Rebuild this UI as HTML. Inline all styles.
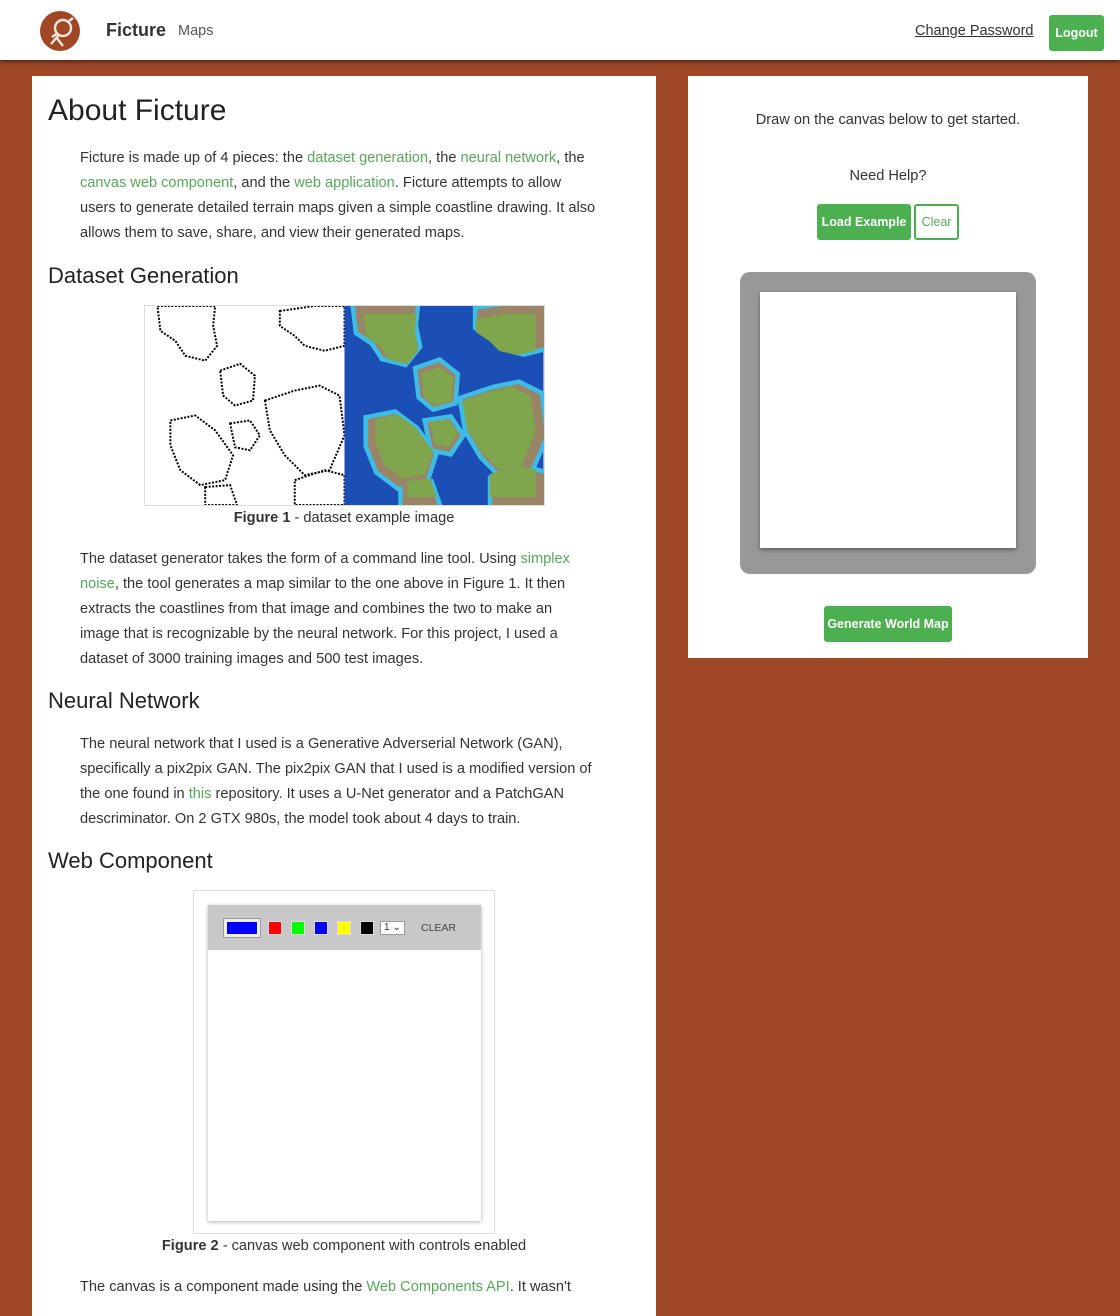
<!DOCTYPE html>
<html><head><meta charset="utf-8"><style>
*{box-sizing:border-box;margin:0;padding:0}
body{width:1120px;height:1301px;overflow:hidden;background:#a04825;font-family:"Liberation Sans",sans-serif;color:#333;position:relative}
.hdr{position:absolute;left:0;top:0;width:1120px;height:60px;background:#fff;box-shadow:0 2px 4px rgba(0,0,0,.5)}
.a{position:absolute;white-space:nowrap}
.left{position:absolute;left:32px;top:76px;width:624px;height:1240px;background:#fff}
.right{position:absolute;left:688px;top:76px;width:400px;height:582px;background:#fff}
p.t{position:absolute;left:48px;width:518px;font-size:14.6px;line-height:25px;color:#333}
h2{position:absolute;left:16px;font-weight:normal;color:#222;font-size:22px}
a{color:#58a55c;text-decoration:none}
.btn{position:absolute;background:#4caf50;color:#fff;font-size:12.5px;font-weight:bold;border-radius:3px;text-align:center}
.cap{position:absolute;width:624px;left:0;text-align:center;font-size:14.6px}
.sw{position:absolute;top:16px;width:14px;height:14px;border:1px solid #ddd}
</style></head><body>
<div class="hdr">
<svg class="a" style="left:39px;top:10px" width="42" height="42" viewBox="0 0 42 42"><circle cx="21" cy="21" r="20" fill="#a04825"/><g stroke="#f3e6dd" stroke-width="2.4" fill="none"><circle cx="24" cy="18" r="8"/><path d="M20 25 L12 34 M17 27 L24 36 M13 27 L19 23 M30 11 L34 8"/></g></svg>
<div class="a" style="left:106px;top:20px;font-size:18px;font-weight:bold;color:#333">Ficture</div>
<div class="a" style="left:178px;top:23px;font-size:14.5px;color:#555">Maps</div>
<div class="a" style="left:915px;top:23px;font-size:14.5px;color:#333;text-decoration:underline">Change Password</div>
<div class="btn" style="left:1049px;top:15px;width:55px;height:36px;line-height:36px">Logout</div>
</div>
<div class="left">
<h2 style="top:18px;font-size:30px">About Ficture</h2>
<p class="t" style="top:70px">Ficture is made up of 4 pieces: the <a>dataset generation</a>, the <a>neural network</a>, the <a>canvas web component</a>, and the <a>web application</a>. Ficture attempts to allow users to generate detailed terrain maps given a simple coastline drawing. It also allows them to save, share, and view their generated maps.</p>
<h2 style="top:187px">Dataset Generation</h2>
<svg class="a" style="left:112px;top:229px;border:1px solid #ddd" width="401" height="201" viewBox="0 0 400 200">
<defs><g id="isl">
<path d="M12 0 L70 0 L68 20 L72 40 L60 55 L40 50 L30 35 L15 25 Z"/>
<path d="M135 5 L170 0 L200 0 L200 40 L180 45 L160 40 L150 30 L135 20 Z"/>
<path d="M75 65 L95 58 L110 70 L108 95 L90 100 L78 90 Z"/>
<path d="M25 115 L50 110 L70 125 L88 150 L80 175 L55 180 L35 165 L25 140 Z"/>
<path d="M85 118 L105 115 L115 130 L105 145 L90 142 Z"/>
<path d="M120 95 L150 85 L175 80 L195 90 L200 130 L185 165 L160 170 L140 150 L125 125 Z"/>
<path d="M60 182 L85 180 L92 200 L60 200 Z"/>
<path d="M150 175 L180 165 L200 170 L200 200 L150 200 Z"/>
</g></defs>
<rect width="200" height="200" fill="#fff"/>
<use href="#isl" fill="none" stroke="#000" stroke-width="2" stroke-dasharray="2 1.5"/>
<g transform="translate(200,0)"><rect width="200" height="200" fill="#1b4fb5"/>
<use href="#isl" fill="#3dbde6" stroke="#3dbde6" stroke-width="12"/>
<use href="#isl" fill="#9a8466" stroke="#9a8466" stroke-width="3"/>
<g transform="translate(8,8) scale(.92)"><use href="#isl" fill="#7fa64d"/></g></g>
</svg>
<div class="cap" style="top:434px"><b>Figure 1</b> - dataset example image</div>
<p class="t" style="top:471px;width:505px">The dataset generator takes the form of a command line tool. Using <a>simplex noise</a>, the tool generates a map similar to the one above in Figure 1. It then extracts the coastlines from that image and combines the two to make an image that is recognizable by the neural network. For this project, I used a dataset of 3000 training images and 500 test images.</p>
<h2 style="top:612px">Neural Network</h2>
<p class="t" style="top:656px">The neural network that I used is a Generative Adverserial Network (GAN), specifically a pix2pix GAN. The pix2pix GAN that I used is a modified version of the one found in <a>this</a> repository. It uses a U-Net generator and a PatchGAN descriminator. On 2 GTX 980s, the model took about 4 days to train.</p>
<h2 style="top:772px">Web Component</h2>
<div class="a" style="left:161px;top:814px;width:302px;height:344px;border:1px solid #ddd">
<div class="a" style="left:14px;top:14px;width:273px;height:316px;background:#fff;box-shadow:0 1px 4px rgba(0,0,0,.3)">
<div class="a" style="left:0;top:0;width:273px;height:45px;background:#c8c8c8">
<div class="a" style="left:15px;top:13px;width:38px;height:20px;border:1px solid #999;background:#eee;padding:3px"><div style="width:100%;height:100%;background:#0000ff"></div></div>
<div class="sw" style="left:60px;background:#f00"></div>
<div class="sw" style="left:83px;background:#0f0"></div>
<div class="sw" style="left:106px;background:#00f"></div>
<div class="sw" style="left:129px;background:#ff0"></div>
<div class="sw" style="left:152px;background:#000"></div>
<div class="a" style="left:172px;top:16px;width:25px;height:14px;border:1px solid #999;background:#fff;font-size:10px;line-height:12px;padding-left:3px">1 ⌄</div>
<div class="a" style="left:213px;top:17px;font-size:10.5px;color:#444">CLEAR</div>
</div></div></div>
<div class="cap" style="top:1162px"><b>Figure 2</b> - canvas web component with controls enabled</div>
<p class="t" style="top:1199px">The canvas is a component made using the <a>Web Components API</a>. It wasn't</p>
</div>
<div class="right">
<div class="a" style="left:0;width:400px;text-align:center;top:36px;font-size:14.6px">Draw on the canvas below to get started.</div>
<div class="a" style="left:0;width:400px;text-align:center;top:92px;font-size:14.6px">Need Help?</div>
<div class="btn" style="left:129px;top:128px;width:94px;height:36px;line-height:36px">Load Example</div>
<div class="a" style="left:226px;top:128px;width:45px;height:36px;line-height:32px;border:2px solid #4caf50;border-radius:3px;color:#58a55c;font-size:12.5px;text-align:center">Clear</div>
<div class="a" style="left:52px;top:196px;width:296px;height:302px;background:#989898;border-radius:10px">
<div class="a" style="left:20px;top:20px;width:256px;height:256px;background:#fff;box-shadow:0 2px 4px rgba(0,0,0,.4)"></div></div>
<div class="btn" style="left:136px;top:530px;width:128px;height:36px;line-height:36px">Generate World Map</div>
</div>
</body></html>
